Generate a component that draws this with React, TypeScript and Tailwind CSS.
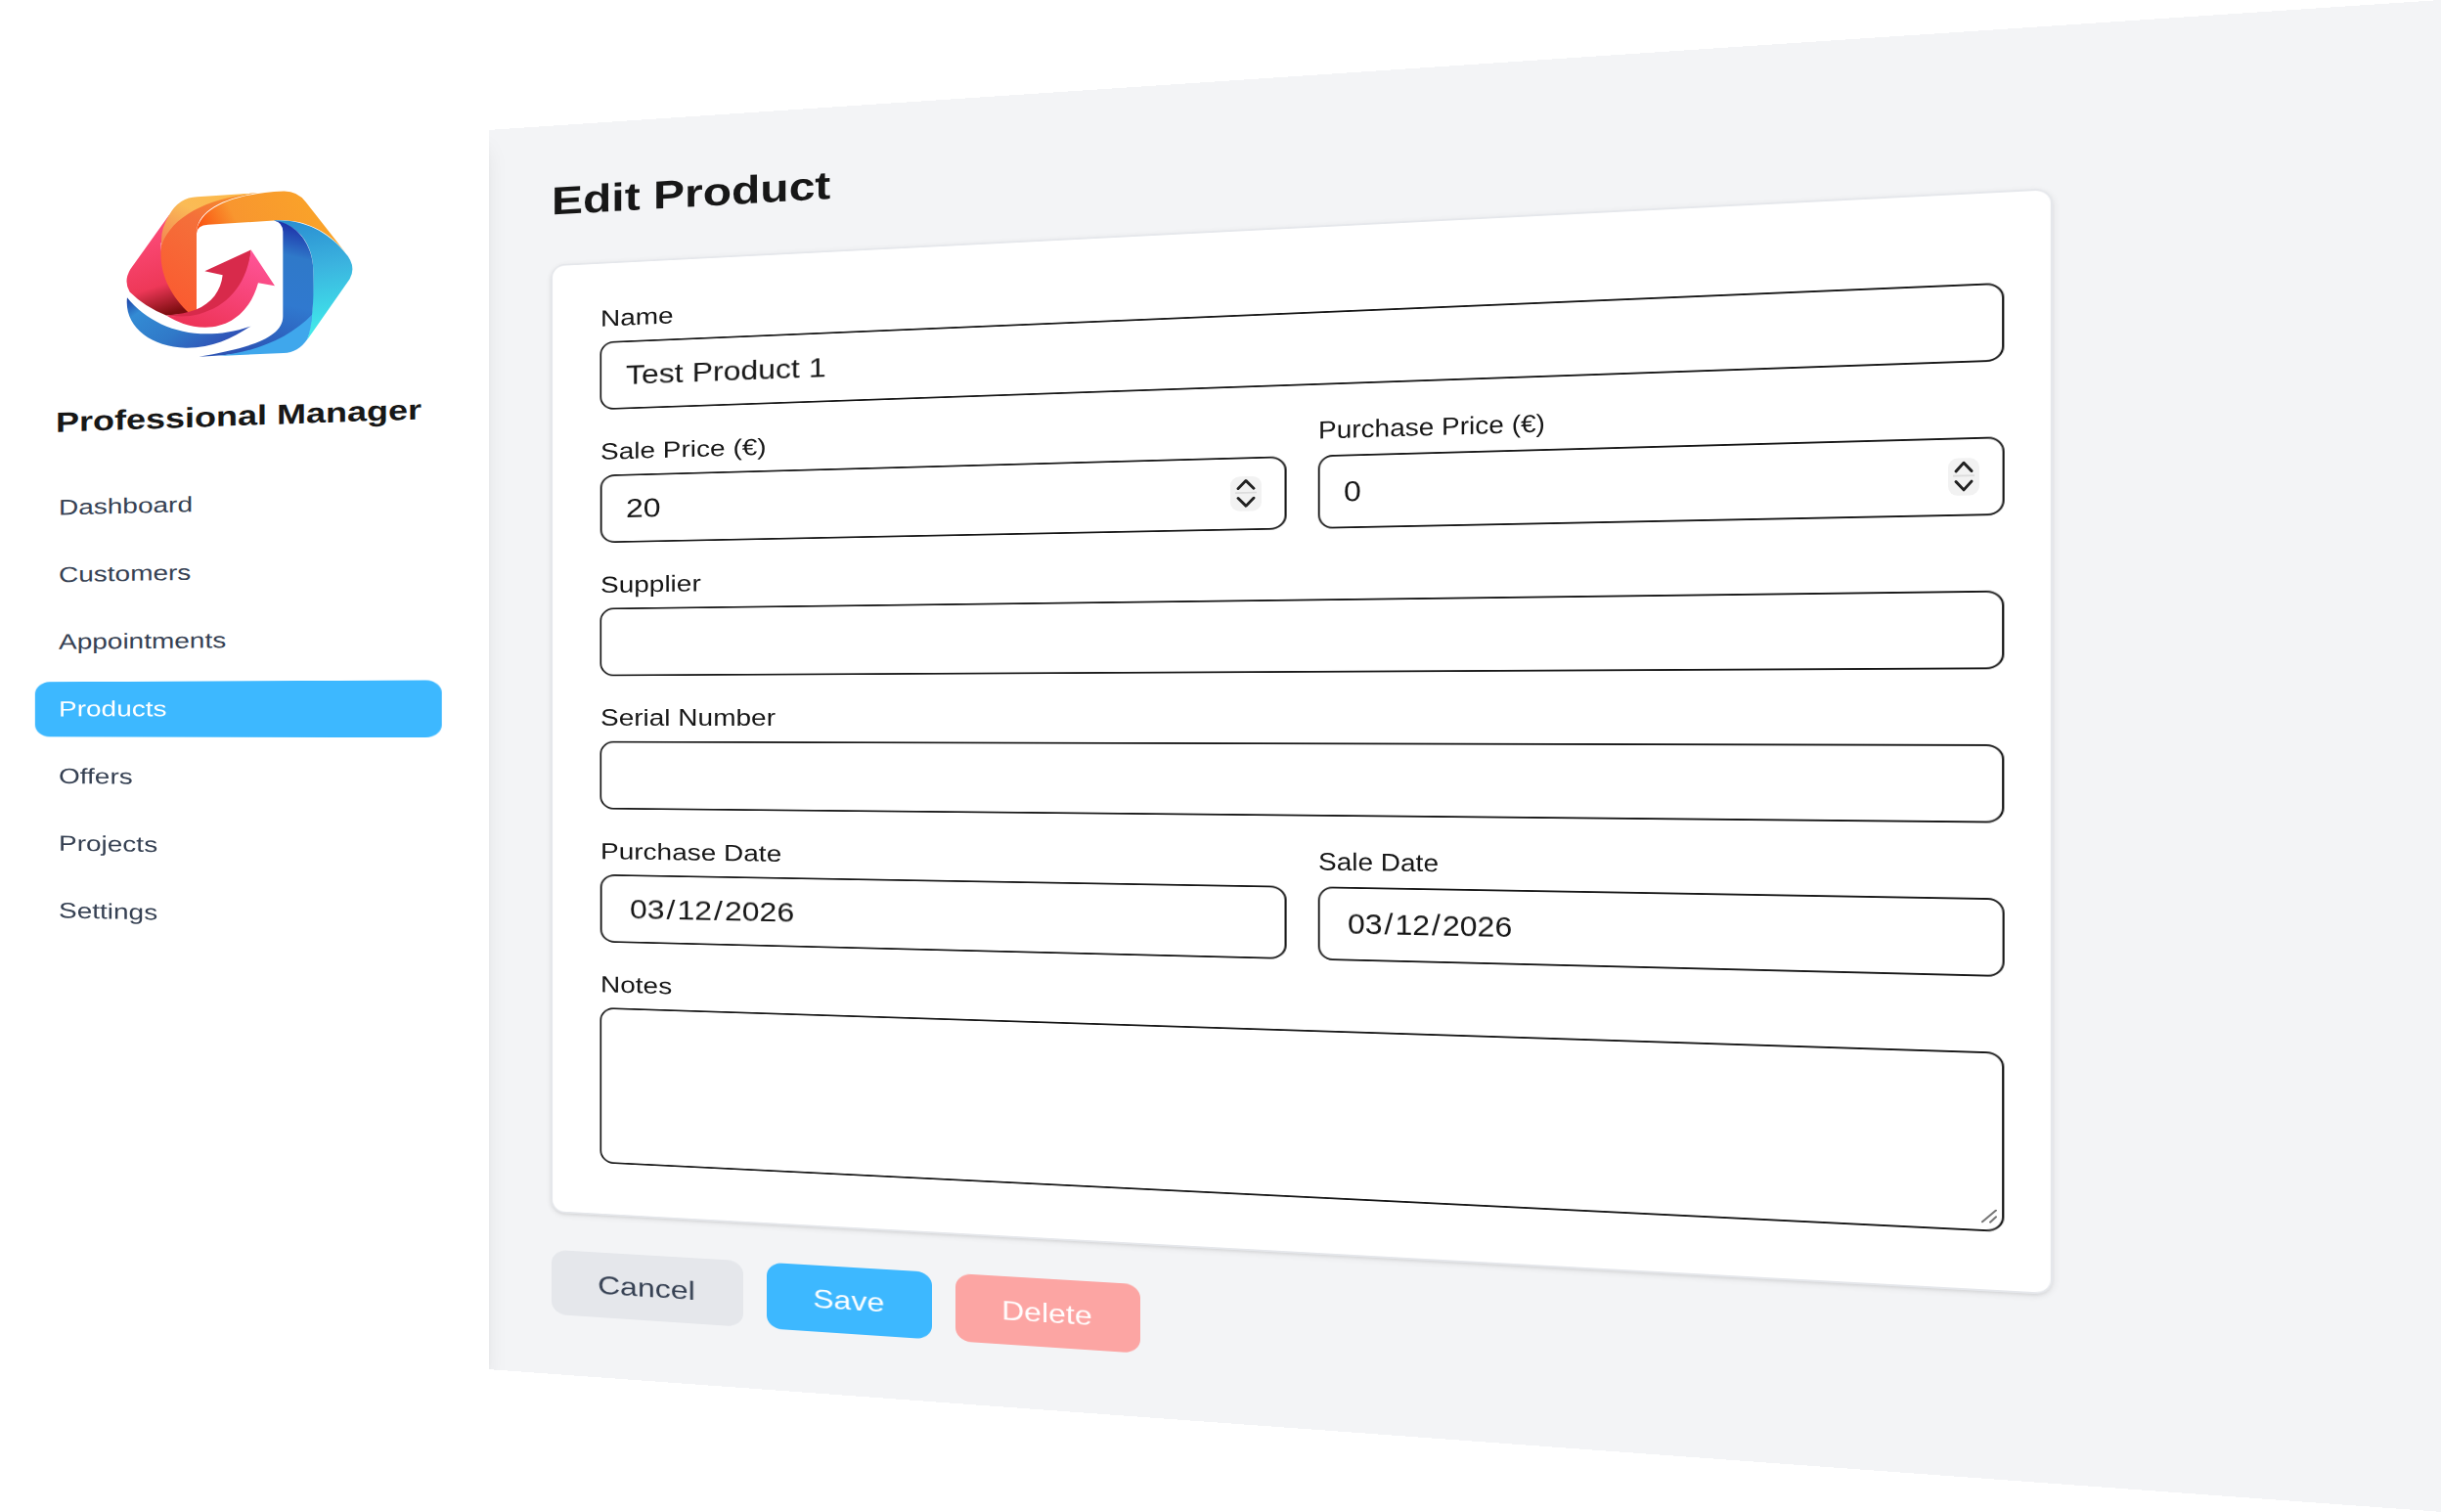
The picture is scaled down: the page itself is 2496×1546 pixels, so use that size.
import { useLayoutEffect, useRef, useState } from "react";
import type { ReactNode, RefObject } from "react";

// Where the left edge of the page starts and ends, as a share of its height.
// The right edge keeps the full height.
const LEFT_TOP = 0.1075;
const LEFT_BOTTOM = 0.882;

const NAV_ITEMS = [
  "Dashboard",
  "Customers",
  "Appointments",
  "Products",
  "Offers",
  "Projects",
  "Settings",
];

// Tilts every [data-tilt] element of the page from its own place in the layout.
// "plane" maps all four corners, "text" follows the slope at the element itself.
function useTilt(pageRef: RefObject<HTMLDivElement | null>) {
  useLayoutEffect(() => {
    const page = pageRef.current;
    if (!page) return;

    const apply = () => {
      const width = page.offsetWidth;
      const height = page.offsetHeight;
      const scaleSlope = (1 - (LEFT_BOTTOM - LEFT_TOP)) / width;
      const topSlope = (-LEFT_TOP * height) / width;
      const scaleAt = (x: number) => LEFT_BOTTOM - LEFT_TOP + scaleSlope * x;
      const project = (x: number, y: number) =>
        LEFT_TOP * height + topSlope * x + y * scaleAt(x);

      page.querySelectorAll<HTMLElement>("[data-tilt]").forEach((el) => {
        let x = 0;
        let y = 0;
        let node: HTMLElement | null = el;
        while (node && node !== page) {
          x += node.offsetLeft;
          y += node.offsetTop;
          node = node.offsetParent as HTMLElement | null;
        }
        const w = el.offsetWidth;
        el.style.transformOrigin = "0 0";

        if (el.dataset.tilt === "text") {
          const ref = Math.min(w / 2, 120);
          const slope = topSlope + (y + el.offsetHeight / 2) * scaleSlope;
          const shift = project(x + ref, y) - y - slope * ref;
          el.style.transform = `matrix(1, ${slope}, 0, ${scaleAt(x + ref)}, 0, ${shift})`;
          return;
        }

        const left = scaleAt(x);
        const ratio = left / scaleAt(x + w);
        const c0 = project(x, y) - y;
        const c1 = project(x + w, y) - y;
        const g = (ratio - 1) / w;
        const b = (c1 * ratio - c0) / w;
        el.style.transform = `matrix3d(${ratio}, ${b}, 0, ${g}, 0, ${left}, 0, 0, 0, 0, 1, 0, 0, ${c0}, 0, 1)`;
      });
    };

    apply();
    const observer = new ResizeObserver(apply);
    observer.observe(page);
    return () => observer.disconnect();
  }, [pageRef]);
}

// Painted box behind some content. The clear margin round it keeps the slanted
// edges inside the layer, where they are smoothed.
function Plane({ className }: { className: string }) {
  return (
    <div
      data-tilt="plane"
      className="pointer-events-none absolute -inset-1 p-1 will-change-transform"
    >
      <div className={`size-full rounded-2xl ${className}`} />
    </div>
  );
}

function Logo() {
  return (
    <svg
      viewBox="0 0 310 276"
      className="h-[276px] w-[310px]"
      role="img"
      aria-label="Professional Manager logo"
    >
      <defs>
        <linearGradient id="pink" x1="0.4" y1="0" x2="0.6" y2="1">
          <stop offset="0" stopColor="#ff4f80" />
          <stop offset="0.7" stopColor="#ee3858" />
          <stop offset="1" stopColor="#7d0d10" />
        </linearGradient>
        <linearGradient id="yellow" x1="1" y1="0" x2="0" y2="1">
          <stop offset="0" stopColor="#fdb845" />
          <stop offset="0.5" stopColor="#fabb56" />
          <stop offset="1" stopColor="#f38452" />
        </linearGradient>
        <linearGradient id="ember" x1="0.8" y1="0" x2="0.2" y2="1">
          <stop offset="0" stopColor="#f6912c" />
          <stop offset="0.35" stopColor="#f4703a" />
          <stop offset="1" stopColor="#fb5a30" />
        </linearGradient>
        <linearGradient id="orange" x1="0" y1="0.6" x2="1" y2="0.4">
          <stop offset="0" stopColor="#fb4d10" />
          <stop offset="0.28" stopColor="#f8962f" />
          <stop offset="1" stopColor="#faa628" />
        </linearGradient>
        <linearGradient id="cyan" x1="0.4" y1="0" x2="0.5" y2="1">
          <stop offset="0" stopColor="#2b90d2" />
          <stop offset="0.4" stopColor="#3bb3df" />
          <stop offset="0.8" stopColor="#3edbe8" />
          <stop offset="1" stopColor="#4af0ea" />
        </linearGradient>
        <linearGradient id="blue" x1="0.8" y1="0" x2="0.6" y2="1">
          <stop offset="0" stopColor="#1c2aa6" />
          <stop offset="0.25" stopColor="#2f79c9" />
          <stop offset="0.6" stopColor="#3079cf" />
          <stop offset="1" stopColor="#2c54b4" />
        </linearGradient>
        <linearGradient id="arrow" x1="0.8" y1="0" x2="0.3" y2="1">
          <stop offset="0" stopColor="#ff5599" />
          <stop offset="1" stopColor="#ee3458" />
        </linearGradient>
        <linearGradient id="swoosh" x1="0" y1="0" x2="1" y2="0.6">
          <stop offset="0" stopColor="#1d3fa6" />
          <stop offset="0.2" stopColor="#338bd4" />
          <stop offset="0.6" stopColor="#3079c8" />
          <stop offset="1" stopColor="#2f4fb5" />
        </linearGradient>
      </defs>
      <g transform="matrix(0.3333 0.0217 0 0.4185 1 -8.5)">
        <path
          d="M250 146 L130 315 Q108 352 128 385 Q175 432 240 457 L312 452 Q222 350 224 235 Z"
          fill="url(#pink)"
        />
        <path
          d="M225 240 C240 150 350 92 520 80 C400 100 334 140 333 205 L333 440 L312 451 C250 395 215 320 225 240 Z"
          fill="url(#ember)"
        />
        <path
          d="M250 146 Q280 94 335 92 L525 80 C380 92 260 145 226 240 Q220 195 250 146 Z"
          fill="url(#yellow)"
        />
        <path
          d="M333 205 C335 135 430 82 600 75 Q642 74 668 108 L790 264 C730 190 660 160 570 165 L368 178 Q335 180 333 205 Z"
          fill="url(#orange)"
        />
        <path
          d="M570 165 C660 160 735 200 785 260 Q826 303 803 345 L673 532 C690 470 691 400 691 320 C690 240 650 180 570 165 Z"
          fill="url(#cyan)"
        />
        <path
          d="M570 165 C650 175 691 250 691 320 C693 400 690 440 684 480 C600 560 470 580 340 584 C480 560 598 530 598 460 L598 200 Q597 170 570 165 Z"
          fill="url(#blue)"
        />
        <path
          d="M400 582 C520 568 620 525 687 455 Q685 500 673 530 Q645 572 600 573 Z"
          fill="#3fa7ec"
        />
        <path
          d="M358 321 L500 255 C492 375 425 450 330 462 Q280 465 240 457 Q300 452 330 440 C380 420 408 380 413 333 Z"
          fill="#d82a4b"
        />
        <path
          d="M500 255 L573 366 L522 357 C500 440 440 494 360 494 C310 494 270 475 240 457 C290 462 310 460 340 453 C430 430 488 360 500 255 Z"
          fill="url(#arrow)"
        />
        <path
          d="M120 402 C200 500 340 545 500 490 C440 530 380 558 300 557 C190 555 110 490 120 402 Z"
          fill="url(#swoosh)"
        />
      </g>
    </svg>
  );
}

function Sidebar() {
  return (
    <aside className="w-[500px] shrink-0 pt-6 pr-12 pl-9">
      <div data-tilt="text" className="mx-auto mb-[18px] w-fit">
        <Logo />
      </div>
      <p
        data-tilt="text"
        className="mx-auto mb-12 w-fit text-[36px] leading-14 font-bold whitespace-nowrap"
      >
        Professional Manager
      </p>
      <nav className="flex flex-col gap-4">
        {NAV_ITEMS.map((item) => {
          const active = item === "Products";
          return (
            <div key={item} className="relative">
              {active && <Plane className="bg-[#3db8ff]" />}
              <a
                href={`#${item.toLowerCase()}`}
                aria-current={active ? "page" : undefined}
                data-tilt="text"
                className={`relative block px-6 py-4 text-[28px] leading-10 ${
                  active ? "text-white" : "text-gray-700"
                }`}
              >
                {item}
              </a>
            </div>
          );
        })}
      </nav>
    </aside>
  );
}

interface FieldProps {
  id: string;
  label: string;
  children: ReactNode;
}

function Field({ id, label, children }: FieldProps) {
  return (
    <div>
      <label
        htmlFor={id}
        data-tilt="text"
        className="mb-2 block w-fit text-[28px] leading-10"
      >
        {label}
      </label>
      <div className="relative">
        <Plane className="border-2 border-neutral-900" />
        {children}
      </div>
    </div>
  );
}

const inputClass =
  "block h-[84px] w-full bg-transparent px-[26px] text-[32px] leading-12 outline-none";

interface TextFieldProps {
  id: string;
  label: string;
  value?: string;
}

function TextField({ id, label, value = "" }: TextFieldProps) {
  return (
    <Field id={id} label={label}>
      <input
        id={id}
        type="text"
        defaultValue={value}
        data-tilt="text"
        className={inputClass}
      />
    </Field>
  );
}

function DateField({ id, label, value }: TextFieldProps) {
  return (
    <Field id={id} label={label}>
      <input
        id={id}
        type="date"
        defaultValue={value}
        data-tilt="text"
        className={`${inputClass} [&::-webkit-calendar-picker-indicator]:hidden [&::-webkit-datetime-edit]:px-[2px] [&::-webkit-datetime-edit-day-field]:px-[2px] [&::-webkit-datetime-edit-month-field]:px-[2px] [&::-webkit-datetime-edit-year-field]:px-[2px]`}
      />
    </Field>
  );
}

interface PriceFieldProps {
  id: string;
  label: string;
  initial: number;
}

function PriceField({ id, label, initial }: PriceFieldProps) {
  const [price, setPrice] = useState(initial);

  return (
    <Field id={id} label={label}>
      <input
        id={id}
        type="number"
        value={price}
        onChange={(e) => setPrice(Number(e.target.value))}
        data-tilt="text"
        className={`${inputClass} [appearance:textfield] [&::-webkit-inner-spin-button]:hidden`}
      />
      <div
        data-tilt="text"
        className="absolute top-[22px] right-[26px] flex h-10 w-8 flex-col overflow-hidden rounded-[10px] bg-[#f2f2f2]"
      >
        <button
          type="button"
          aria-label={`Increase ${label}`}
          onClick={() => setPrice(price + 1)}
          className="h-5 w-8"
        >
          <svg viewBox="0 0 32 20" fill="none" className="h-5 w-8">
            <path
              d="M8 14 L16 5 L24 14"
              stroke="#222"
              strokeWidth="3"
              strokeLinecap="round"
              strokeLinejoin="round"
            />
            <path d="M5 19 H27" stroke="#dcdcdc" strokeWidth="2" />
          </svg>
        </button>
        <button
          type="button"
          aria-label={`Decrease ${label}`}
          onClick={() => setPrice(price - 1)}
          className="h-5 w-8"
        >
          <svg viewBox="0 0 32 20" fill="none" className="h-5 w-8">
            <path
              d="M8 5 L16 14 L24 5"
              stroke="#222"
              strokeWidth="3"
              strokeLinecap="round"
              strokeLinejoin="round"
            />
          </svg>
        </button>
      </div>
    </Field>
  );
}

function ProductForm() {
  return (
    <form onSubmit={(e) => e.preventDefault()} className="w-full max-w-[1536px]">
      <div className="relative px-[50px] pt-[50px] pb-16">
        <Plane className="border-2 border-gray-200 bg-white shadow-[0_2px_6px_rgba(0,0,0,0.1),0_2px_4px_-2px_rgba(0,0,0,0.1)]" />
        <div className="relative flex flex-col gap-8">
          <TextField id="name" label="Name" value="Test Product 1" />
          <div className="grid grid-cols-2 gap-8">
            <PriceField id="sale-price" label="Sale Price (€)" initial={20} />
            <PriceField id="purchase-price" label="Purchase Price (€)" initial={0} />
          </div>
          <TextField id="supplier" label="Supplier" />
          <TextField id="serial" label="Serial Number" />
          <div className="grid grid-cols-2 gap-8">
            <DateField id="purchase-date" label="Purchase Date" value="2026-03-12" />
            <DateField id="sale-date" label="Sale Date" value="2026-03-12" />
          </div>
          <Field id="notes" label="Notes">
            <textarea
              id="notes"
              data-tilt="text"
              className="block h-48 w-full resize-none bg-transparent px-[26px] py-4 text-[32px] leading-12 outline-none"
            />
            <div data-tilt="text" className="absolute right-2 bottom-2 size-4">
              <svg
                viewBox="0 0 16 16"
                fill="none"
                stroke="#777"
                strokeWidth="2"
                strokeLinecap="round"
                className="size-4"
                aria-hidden="true"
              >
                <path d="M1 14 L15 1 M9 14 L15 8" />
              </svg>
            </div>
          </Field>
        </div>
      </div>

      <div className="mt-[46px] flex gap-6 text-[32px] leading-12">
        <button
          type="button"
          data-tilt="plane"
          className="rounded-2xl bg-gray-200 px-12 py-4 text-gray-700"
        >
          Cancel
        </button>
        <button
          type="submit"
          data-tilt="plane"
          className="rounded-2xl bg-[#3db8ff] px-12 py-4 text-white"
        >
          Save
        </button>
        <button
          type="button"
          data-tilt="plane"
          className="rounded-2xl bg-[#fca5a3] px-12 py-4 text-white"
        >
          Delete
        </button>
      </div>
    </form>
  );
}

export default function App() {
  const pageRef = useRef<HTMLDivElement>(null);
  useTilt(pageRef);

  return (
    <div
      ref={pageRef}
      className="relative flex min-h-screen overflow-hidden bg-white font-['Liberation_Sans',Arial,sans-serif] text-neutral-900"
    >
      <Sidebar />
      <main className="relative flex-1 px-16 pt-[62px] pb-16">
        <div data-tilt="plane" className="absolute inset-0 overflow-hidden bg-gray-100">
          {/* shadow that the sidebar casts on the content */}
          <div className="absolute inset-y-0 right-full w-20 shadow-[0_20px_30px_-6px_rgba(0,0,0,0.1),0_8px_12px_-8px_rgba(0,0,0,0.1)]" />
        </div>
        <div className="relative">
          <h1
            data-tilt="text"
            className="mb-[46px] w-fit text-[48px] leading-16 font-bold whitespace-nowrap"
          >
            Edit Product
          </h1>
          <ProductForm />
        </div>
      </main>
    </div>
  );
}
